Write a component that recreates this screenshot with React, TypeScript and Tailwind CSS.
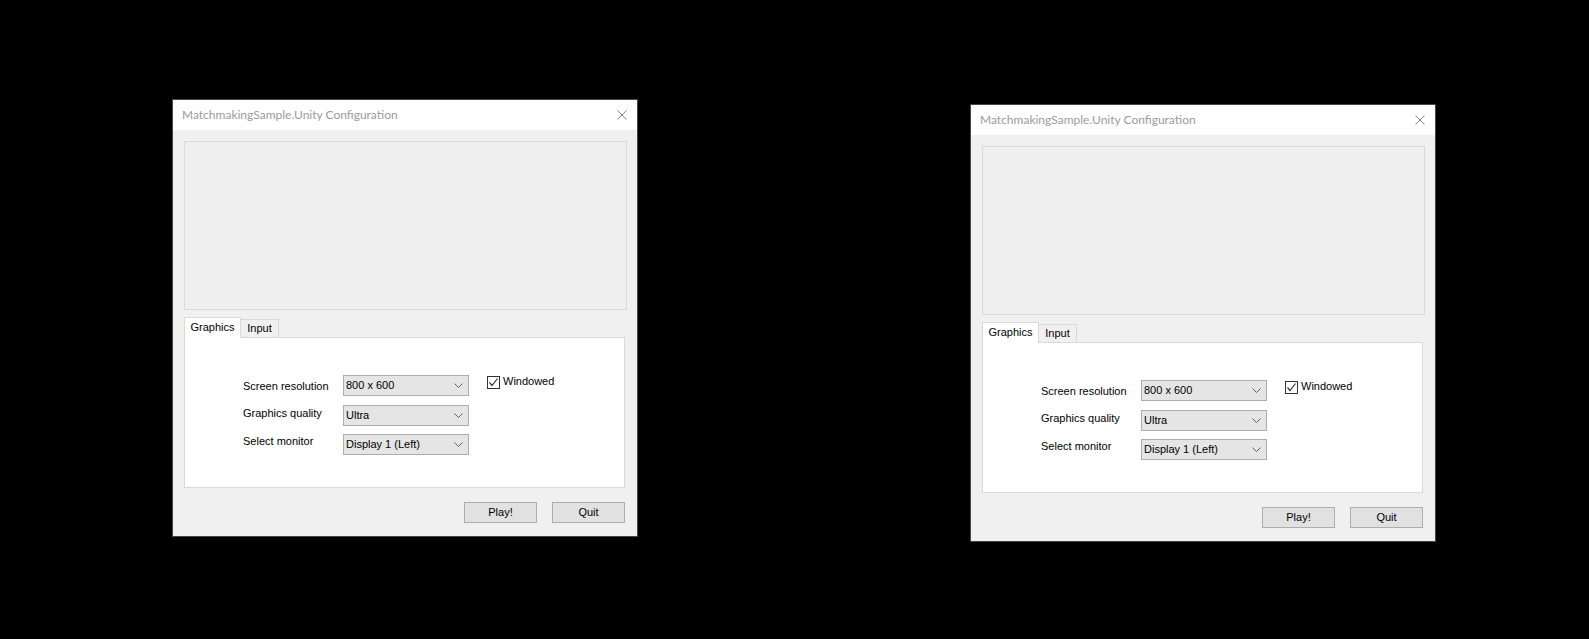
import React from "react";

const ui = { fontFamily: '"Liberation Sans", Arial, sans-serif' };
const titleFont = { fontFamily: 'Lato, "Noto Sans", sans-serif' };

function Chevron() {
  return (
    <svg width="9" height="5" viewBox="0 0 9 5" className="block">
      <path d="M0.5 0.5 L4.5 4.5 L8.5 0.5" fill="none" stroke="#606060" strokeWidth="1" />
    </svg>
  );
}

function Combo({ value }: { value: string }) {
  return (
    <div className="flex h-[21px] w-[126px] items-center justify-between border border-[#adadad] bg-[#e5e5e5] pl-[2px] pr-[5px] text-[11px] leading-[13px] text-black">
      <span>{value}</span>
      <Chevron />
    </div>
  );
}

function Button({ label }: { label: string }) {
  return (
    <div className="flex h-[21px] w-[73px] items-center justify-center border border-[#adadad] bg-[#e1e1e1] text-[11px] leading-[13px] text-black">
      {label}
    </div>
  );
}

function ConfigWindow({ className }: { className: string }) {
  return (
    <div className={`absolute flex h-[438px] w-[466px] flex-col border border-[#454545] ${className}`} style={ui}>
      <div className="flex h-[30px] shrink-0 items-center justify-between bg-white pl-[9px] pr-[9px]">
        <span className="text-[12px] leading-[16px] text-[#9b9b9b]" style={titleFont}>
          MatchmakingSample.Unity Configuration
        </span>
        <svg width="10" height="10" viewBox="0 0 10 10" className="mr-[1px] block">
          <path d="M0.5 0.5 L9.5 9.5 M9.5 0.5 L0.5 9.5" stroke="#808080" strokeWidth="1" />
        </svg>
      </div>
      <div className="flex flex-1 flex-col bg-[#f0f0f0] pl-[11px] pr-[10px] pt-[11px]">
        <div className="h-[169px] w-[443px] border border-[#dadada] bg-[#efefef]" />
        <div className="mt-[7px] flex h-[20px] items-end text-[11px] leading-[13px] text-black">
          <div className="relative z-10 -mb-[1px] flex h-[21px] w-[57px] justify-center border-l border-r border-t border-[#d9d9d9] bg-white pt-[3px]">
            Graphics
          </div>
          <div className="flex h-[18px] w-[38px] justify-center border-r border-t border-[#d9d9d9] bg-[#f0f0f0] pt-[2px]">
            Input
          </div>
        </div>
        <div className="h-[151px] w-[441px] border border-[#d9d9d9] bg-white pl-[58px] pt-[37px] text-[11px] leading-[13px] text-black">
          <div className="flex items-start">
            <div className="flex flex-col">
              <div className="flex items-start">
                <div className="mt-[5px] w-[100px]">Screen resolution</div>
                <Combo value="800 x 600" />
              </div>
              <div className="mt-[9px] flex items-start">
                <div className="mt-[2px] w-[100px]">Graphics quality</div>
                <Combo value="Ultra" />
              </div>
              <div className="mt-[8px] flex items-start">
                <div className="mt-[1px] w-[100px]">Select monitor</div>
                <Combo value="Display 1 (Left)" />
              </div>
            </div>
            <div className="ml-[18px] flex items-start">
              <div className="mt-[1px] flex h-[13px] w-[13px] items-center justify-center border border-[#333333] bg-white">
                <svg width="11" height="11" viewBox="0 0 11 11" className="block">
                  <path d="M1.5 5.5 L4 8.5 L9.5 1.5" fill="none" stroke="#333333" strokeWidth="1.2" />
                </svg>
              </div>
              <span className="ml-[3px]">Windowed</span>
            </div>
          </div>
        </div>
        <div className="mr-[2px] mt-[14px] flex justify-end gap-[15px]">
          <Button label="Play!" />
          <Button label="Quit" />
        </div>
      </div>
    </div>
  );
}

export default function App() {
  return (
    <div className="relative h-[639px] w-[1589px] overflow-hidden bg-black">
      <ConfigWindow className="left-[172px] top-[99px]" />
      <ConfigWindow className="left-[970px] top-[104px]" />
    </div>
  );
}
